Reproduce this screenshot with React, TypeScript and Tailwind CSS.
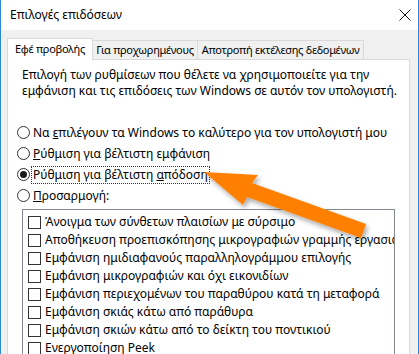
import React from 'react';

const font = { fontFamily: '"Noto Sans", "Open Sans", sans-serif' };

function Radio({ checked, children, focused }: { checked?: boolean; children: React.ReactNode; focused?: boolean }) {
  return (
    <div className="flex items-center h-[21px] pl-[9px] whitespace-nowrap">
      <span className="w-[13px] h-[13px] rounded-full border border-[#333] bg-white flex items-center justify-center shrink-0">
        {checked && <span className="w-[7px] h-[7px] rounded-full bg-[#1a1a1a]" />}
      </span>
      <span
        className={
          'ml-[2px] px-[1px] leading-[16px] ' +
          (focused ? 'outline outline-1 outline-dotted outline-[#333]' : '')
        }
      >
        {children}
      </span>
    </div>
  );
}

function Check({ children }: { children: React.ReactNode }) {
  return (
    <div className="flex items-center h-[18px] pl-[5px] whitespace-nowrap">
      <span className="w-[13px] h-[13px] border border-[#333] bg-white shrink-0" />
      <span className="ml-[4px]">{children}</span>
    </div>
  );
}

const items = [
  'Άνοιγμα των σύνθετων πλαισίων με σύρσιμο',
  'Αποθήκευση προεπισκόπησης μικρογραφιών γραμμής εργασιών',
  'Εμφάνιση ημιδιαφανούς παραλληλογράμμου επιλογής',
  'Εμφάνιση μικρογραφιών και όχι εικονιδίων',
  'Εμφάνιση περιεχομένων του παραθύρου κατά τη μεταφορά',
  'Εμφάνιση σκιάς κάτω από παράθυρα',
  'Εμφάνιση σκιών κάτω από το δείκτη του ποντικιού',
  'Ενεργοποίηση Peek',
];

export default function App() {
  return (
    <div
      className="relative w-[419px] h-[354px] overflow-hidden bg-[#f0f0f0] border-x border-[#2b88d8] text-[12px] text-black"
      style={font}
    >
      <div className="h-[30px] bg-white flex items-center justify-between pl-[9px] pr-[6px]">
        <span>Επιλογές επιδόσεων</span>
        <svg width="12" height="12" viewBox="0 0 12 12" className="mr-[1px]">
          <path d="M0.5 0.5 L11.5 11.5 M11.5 0.5 L0.5 11.5" stroke="#111" strokeWidth="1" />
        </svg>
      </div>

      <div className="pl-[6px] pr-[8px] pt-[7px]">
        <div className="flex items-end h-[22px] relative z-10 whitespace-nowrap text-[11px] tracking-[-0.3px]">
          <div className="h-[22px] w-[86px] bg-white border border-b-0 border-[#d9d9d9] flex items-center justify-center -mb-px pb-px shrink-0">
            Εφέ προβολής
          </div>
          <div className="h-[19px] w-[105px] bg-[#f0f0f0] border border-l-0 border-b-0 border-[#d9d9d9] flex items-center justify-center shrink-0">
            Για προχωρημένους
          </div>
          <div className="h-[19px] w-[166px] bg-[#f0f0f0] border border-l-0 border-b-0 border-[#d9d9d9] flex items-center justify-center shrink-0">
            Αποτροπή εκτέλεσης δεδομένων
          </div>
        </div>

        <div className="bg-white border border-[#d9d9d9] h-[320px] pt-[7px]">
          <p className="pl-[14px] pr-[8px] leading-[16px]">
            Επιλογή των ρυθμίσεων που θέλετε να χρησιμοποιείτε για την εμφάνιση και τις επιδόσεις των Windows σε
            αυτόν τον υπολογιστή.
          </p>

          <div className="mt-[23px]">
            <Radio>
              Να <u>ε</u>πιλέγουν τα Windows το καλύτερο για τον υπολογιστή μου
            </Radio>
            <Radio>
              <u>Ρ</u>ύθμιση για βέλτιστη εμφάνιση
            </Radio>
            <Radio checked focused>
              Ρύθμιση για βέλτιστη <u>α</u>πόδοση
            </Radio>
            <Radio>
              <u>Π</u>ροσαρμογή:
            </Radio>
          </div>

          <div className="ml-[14px] mr-[14px] mt-[3px] border border-[#828790] h-[160px] pt-[3px] overflow-hidden">
            {items.map((t) => (
              <Check key={t}>{t}</Check>
            ))}
          </div>
        </div>
      </div>

      <svg className="absolute left-0 top-0 pointer-events-none" width="419" height="354">
        <defs>
          <filter id="sh" x="-20%" y="-20%" width="140%" height="140%">
            <feDropShadow dx="2" dy="3" stdDeviation="2.5" floodColor="#000" floodOpacity="0.35" />
          </filter>
        </defs>
        <polygon
          points="203,172 257,175 251,183 365,224 360,238 246,197 242,205"
          fill="#ff8000"
          filter="url(#sh)"
        />
      </svg>
    </div>
  );
}
